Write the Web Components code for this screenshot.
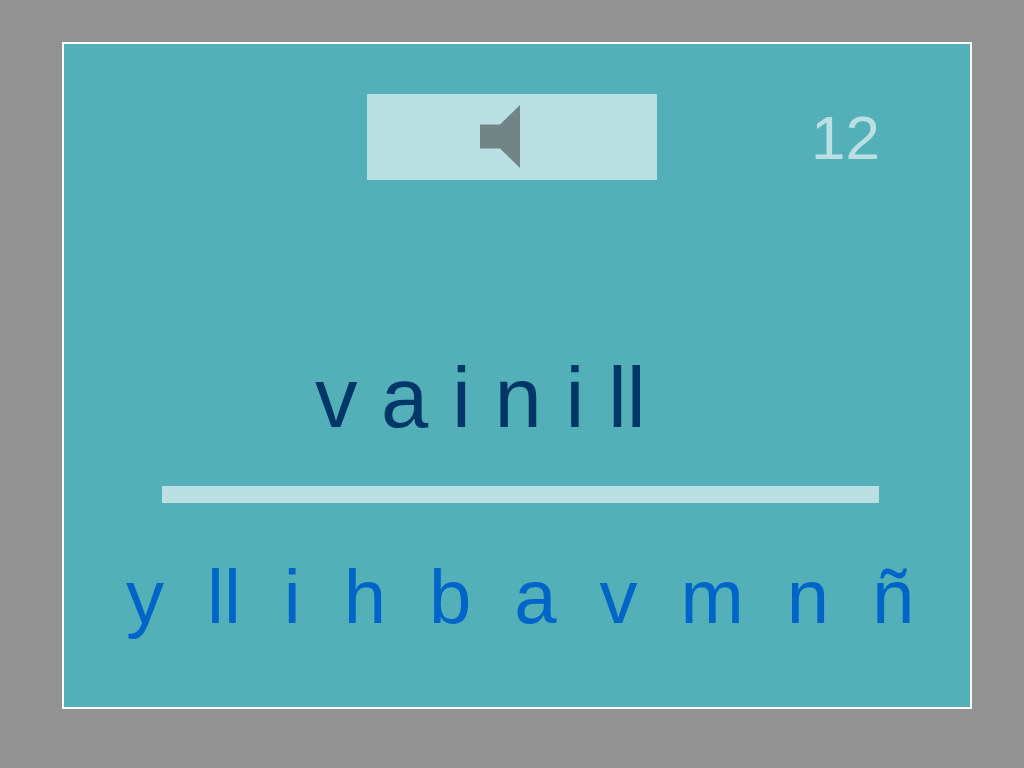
<!DOCTYPE html>
<html lang="es">
<head>
<meta charset="utf-8">
<meta name="viewport" content="width=device-width, initial-scale=1">
<title>vainilla</title>
<style>
    body {
        margin: 0;
        background: #929292;
        font-family: "Liberation Sans", Arial, sans-serif;
    }
</style>
</head>
<body>
<spelling-card>
    <sound-button slot="sound"></sound-button>
    <span slot="counter">12</span>
    <span slot="word">v a i n i ll</span>
    <letter-bank slot="letters" letters="y ll i h b a v m n ñ"></letter-bank>
</spelling-card>

<script>
// The card: sound and counter on top, the word on its line, the letters below
const cardTemplate = document.createElement('template');
cardTemplate.innerHTML = `
<style>
    :host {
        display: flex;
        box-sizing: border-box;
        min-height: 100vh;
        padding: 42px 52px 59px 62px;
    }
    .card {
        flex: 1;
        min-width: 0;
        border: 2px solid #fff;
        background: #54b0b8;
    }
    header {
        display: grid;
        grid-template-columns: 1fr 290px 1fr;
        align-items: start;
        padding: 50px 10px 0 0;
    }
    .sound {
        grid-column: 2;
    }
    .counter {
        padding-left: 154px;
        font-size: 62px;
        line-height: 88px;
        color: #bae0e3;
    }
    .word {
        margin-top: 166px;
        padding-left: 251px;
        font-size: 85px;
        line-height: 100px;
        color: #003768;
    }
    .line {
        height: 17px;
        margin: 38px 91px 50px 98px;
        background: #bae0e3;
    }
    .letters {
        padding-left: 62px;
    }
</style>
<main class="card">
    <header>
        <div class="sound"><slot name="sound"></slot></div>
        <div class="counter"><slot name="counter"></slot></div>
    </header>
    <div class="word"><slot name="word"></slot></div>
    <div class="line"></div>
    <div class="letters"><slot name="letters"></slot></div>
</main>
`;

class SpellingCard extends HTMLElement {
    constructor() {
        super();
        this.attachShadow({ mode: 'open' });
        this.shadowRoot.appendChild(cardTemplate.content.cloneNode(true));
    }

    connectedCallback() {
        // A chosen letter is added to the word
        this.addEventListener('letter', (e) => {
            const word = this.querySelector('[slot="word"]');
            word.textContent += ' ' + e.detail;
        });
    }
}

const soundTemplate = document.createElement('template');
soundTemplate.innerHTML = `
<style>
    :host {
        display: block;
    }
    button {
        display: flex;
        align-items: center;
        justify-content: center;
        width: 100%;
        height: 86px;
        padding: 0;
        border: 0;
        background: #bae0e3;
        cursor: pointer;
    }
    svg {
        display: block;
        fill: #718587;
    }
</style>
<button type="button" aria-label="Escuchar">
    <svg width="64" height="64" viewBox="0 0 64 64" aria-hidden="true">
        <path d="M0 19.500H20L40 0V63L20 43.500H0Z"/>
    </svg>
</button>
`;

class SoundButton extends HTMLElement {
    constructor() {
        super();
        this.attachShadow({ mode: 'open' });
        this.shadowRoot.appendChild(soundTemplate.content.cloneNode(true));
    }
}

const bankTemplate = document.createElement('template');
bankTemplate.innerHTML = `
<style>
    :host {
        display: flex;
        gap: 43px;
    }
    button {
        padding: 0;
        border: 0;
        background: none;
        font: inherit;
        font-size: 76px;
        line-height: 88px;
        color: #0064c8;
        cursor: pointer;
    }
</style>
`;

class LetterBank extends HTMLElement {
    constructor() {
        super();
        this.attachShadow({ mode: 'open' });
        this.shadowRoot.appendChild(bankTemplate.content.cloneNode(true));
    }

    connectedCallback() {
        // One button per letter
        this.getAttribute('letters').split(' ').forEach((letter) => {
            const button = document.createElement('button');
            button.type = 'button';
            button.textContent = letter;
            button.addEventListener('click', () => {
                this.dispatchEvent(new CustomEvent('letter', { detail: letter, bubbles: true }));
            });
            this.shadowRoot.appendChild(button);
        });
    }
}

customElements.define('spelling-card', SpellingCard);
customElements.define('sound-button', SoundButton);
customElements.define('letter-bank', LetterBank);
</script>
</body>
</html>
